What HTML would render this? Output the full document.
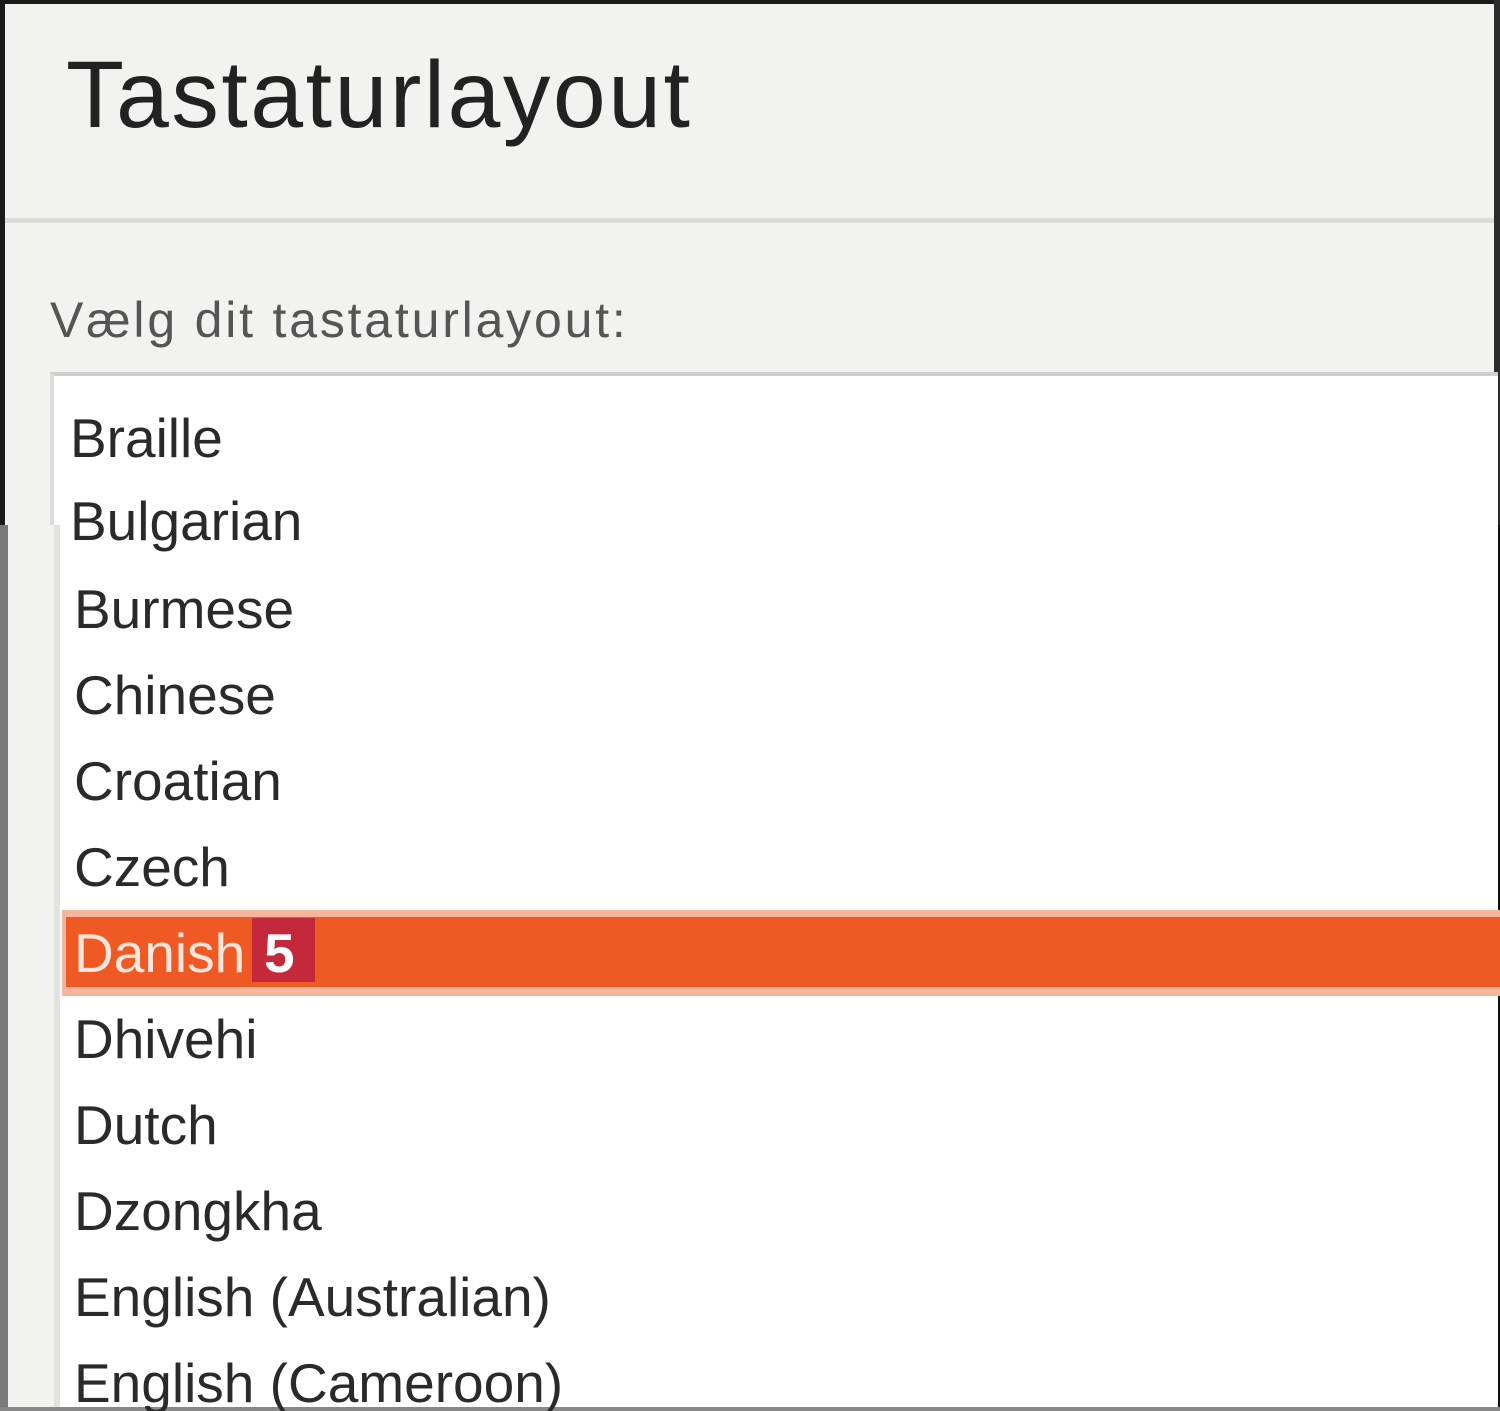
<!DOCTYPE html>
<html><head><meta charset="utf-8"><style>
html,body{margin:0;padding:0;width:1500px;height:1411px;overflow:hidden;background:#f2f2f1;}
body{position:relative;font-family:"Liberation Sans","DejaVu Sans",sans-serif;}
.a{position:absolute;}
.row{position:absolute;left:74px;height:86px;line-height:86px;font-size:55px;color:#2a2a2a;white-space:nowrap;}
</style></head><body>
<div class="a" style="left:0;top:0;width:1500px;height:4px;background:#1a1a1a"></div>
<div class="a" style="left:0;top:0;width:5px;height:525px;background:#1a1a1a"></div>
<div class="a" style="right:0;top:0;width:6px;height:525px;background:#2a2c2e"></div>
<div class="a" style="right:0;top:525px;width:4px;height:886px;background:#111"></div>
<div class="a" style="left:66px;top:30px;font-size:95px;line-height:130px;color:#222;letter-spacing:2.5px">Tastaturlayout</div>
<div class="a" style="left:5px;top:218px;width:1489px;height:5px;background:#dcdcdb"></div>
<div class="a" style="left:50px;top:275px;font-size:50px;line-height:90px;color:#555;letter-spacing:2.8px">Vælg dit tastaturlayout:</div>
<div class="a" style="left:50px;top:372px;width:1444px;height:1036px;background:#fff;border-top:4px solid #cfcfce;border-left:4px solid #dcdcdb;"></div>
<div class="a" style="left:0;top:525px;width:8px;height:886px;background:#7a7a7a"></div>
<div class="a" style="left:8px;top:525px;width:46px;height:886px;background:#f2f2f1"></div>
<div class="a" style="left:54px;top:525px;width:6px;height:886px;background:#e2e2e1"></div>
<div class="a" style="left:0;top:1407px;width:1500px;height:4px;background:#888"></div>
<div class="a" style="left:62px;top:910px;width:1438px;height:86px;background:#f6b69d"></div>
<div class="a" style="left:66px;top:917px;width:1434px;height:70px;background:#ef5a24"></div>
<div class="a" style="left:252px;top:918px;width:63px;height:64px;background:#c4283b"></div>
<div class="row" style="left:70px;top:395px">Braille</div>
<div class="row" style="left:70px;top:478px">Bulgarian</div>
<div class="row" style="top:566px">Burmese</div>
<div class="row" style="top:652px">Chinese</div>
<div class="row" style="top:738px">Croatian</div>
<div class="row" style="top:824px">Czech</div>
<div class="row" style="top:910px;color:#fde6dc">Danish</div>
<div class="row" style="left:264px;top:910px;color:#fff;font-weight:bold">5</div>
<div class="row" style="top:996px">Dhivehi</div>
<div class="row" style="top:1082px">Dutch</div>
<div class="row" style="top:1168px">Dzongkha</div>
<div class="row" style="top:1254px">English (Australian)</div>
<div class="row" style="top:1340px">English (Cameroon)</div>
</body></html>
